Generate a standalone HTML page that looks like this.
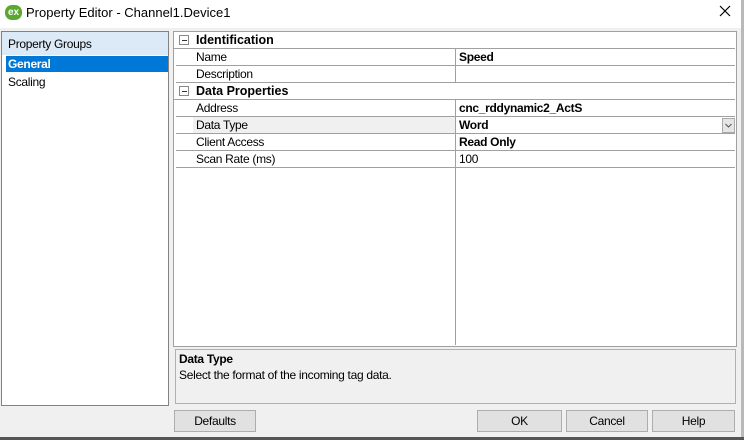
<html><head><style>
body{margin:0;width:744px;height:440px;background:#f0f0f0;font-family:"Liberation Sans",sans-serif;font-size:12px;color:#000;position:relative;overflow:hidden}
.a{position:absolute}
.row{position:absolute;left:176px;width:559px;height:16px;border-bottom:1px solid #a0a0a0}
.l{position:absolute;left:20px;top:1px;letter-spacing:-0.3px}
.v{position:absolute;left:283px;top:1px;letter-spacing:-0.3px}
.cat{position:absolute;left:174px;width:561px;height:16px;border-bottom:1px solid #a0a0a0;font-weight:bold;font-size:12.5px;background:#fff;z-index:2}
.box{position:absolute;left:5px;top:3px;width:8px;height:8px;border:1px solid #888;background:#fff}
.box:after{content:"";position:absolute;left:2px;top:4px;width:5px;height:1px;background:#333}
.btn{position:absolute;top:410px;height:22px;background:#e1e1e1;border:1px solid #adadad;box-sizing:border-box;text-align:center;line-height:20px;letter-spacing:-0.3px}
</style></head><body>
<div class="a" style="left:0;top:0;width:744px;height:28px;background:#fff"></div>
<div class="a" style="left:5px;top:5px;width:17px;height:15px;background:#5aa832;border-radius:7px;color:#fff;font-size:10px;font-weight:bold;text-align:center;line-height:15px">ex</div>
<div class="a" style="left:26px;top:5px;font-size:13px">Property Editor - Channel1.Device1</div>
<svg class="a" style="left:719px;top:5px" width="12" height="12"><path d="M1 1L11 11M11 1L1 11" stroke="#000" stroke-width="1.2"/></svg>
<div class="a" style="left:741px;top:0;width:3px;height:440px;background:#b9b9b9"></div>
<div class="a" style="left:1px;top:31px;width:166px;height:373px;background:#fff;border:1px solid #828282"></div>
<div class="a" style="left:2px;top:32px;width:166px;height:23px;background:#dce9f7"></div>
<div class="a" style="left:8px;top:37px;letter-spacing:-0.3px">Property Groups</div>
<div class="a" style="left:6px;top:56px;width:162px;height:16px;background:#0078d7"></div>
<div class="a" style="left:8px;top:57px;color:#fff;font-weight:bold;letter-spacing:-0.3px">General</div>
<div class="a" style="left:8px;top:75px;letter-spacing:-0.3px">Scaling</div>
<div class="a" style="left:173px;top:31px;width:562px;height:314px;background:#fff;border:1px solid #a0a0a0"></div>
<div class="a" style="left:455px;top:32px;width:1px;height:313px;background:#a0a0a0;z-index:1"></div>
<div class="cat" style="top:32px"><div class="box"></div><span style="position:absolute;left:22px;top:1px">Identification</span></div>
<div class="row" style="top:49px"><span class="l">Name</span><span class="v" style="font-weight:bold">Speed</span></div>
<div class="row" style="top:66px"><span class="l">Description</span></div>
<div class="cat" style="top:83px"><div class="box"></div><span style="position:absolute;left:22px;top:1px">Data Properties</span></div>
<div class="row" style="top:100px"><span class="l">Address</span><span class="v" style="font-weight:bold">cnc_rddynamic2_ActS</span></div>
<div class="row" style="top:117px"><div class="a" style="left:17px;top:0;width:262px;height:16px;background:#f0f0f0"></div><span class="l">Data Type</span><span class="v" style="font-weight:bold">Word</span><svg class="a" style="left:546px;top:1px" width="13" height="15"><rect x="0.5" y="0.5" width="12" height="14" fill="#e5e5e5" stroke="#aaa"/><path d="M3.5 6L6.5 9L9.5 6" stroke="#555" fill="none"/></svg></div>
<div class="row" style="top:134px"><span class="l">Client Access</span><span class="v" style="font-weight:bold">Read Only</span></div>
<div class="row" style="top:151px"><span class="l">Scan Rate (ms)</span><span class="v">100</span></div>
<div class="a" style="left:175px;top:349px;width:559px;height:53px;border:1px solid #b0b0b0;background:#f0f0f0"></div>
<div class="a" style="left:179px;top:352px;font-weight:bold;letter-spacing:-0.3px">Data Type</div>
<div class="a" style="left:179px;top:368px;letter-spacing:-0.3px">Select the format of the incoming tag data.</div>
<div class="btn" style="left:174px;width:82px">Defaults</div>
<div class="btn" style="left:477px;width:85px">OK</div>
<div class="btn" style="left:566px;width:82px">Cancel</div>
<div class="btn" style="left:652px;width:83px">Help</div>
<div class="a" style="left:0;top:437px;width:744px;height:3px;background:#555"></div>
</body></html>
